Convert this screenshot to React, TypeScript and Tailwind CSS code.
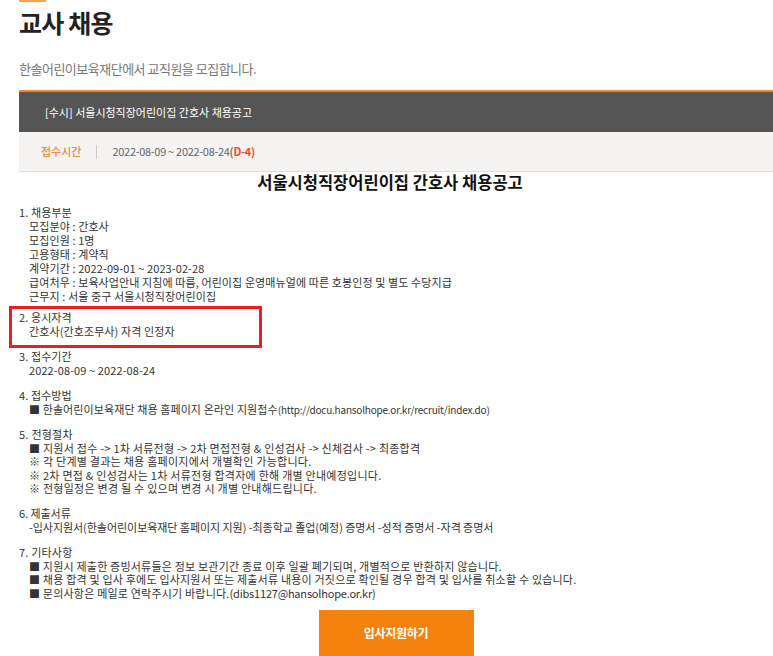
const FONT = "font-['Noto_Sans_CJK_KR','Noto_Sans',sans-serif]"

function Line({ children, indent = false, tight = false }: { children: React.ReactNode; indent?: boolean; tight?: boolean }) {
  return (
    <p className={`whitespace-nowrap ${tight ? 'h-[13.6px] leading-[13.6px]' : 'h-[14px] leading-[14px]'} ${indent ? 'pl-[10px]' : ''}`}>
      {children}
    </p>
  )
}

export default function App() {
  return (
    <div className={`w-[773px] h-[656px] overflow-hidden bg-white ${FONT}`}>
      <div className="pl-[19px]">
        <div className="w-[27px] h-[2px] bg-[#f7a24a]" />
        <h1 className="mt-[3px] text-[25px] font-bold leading-[34px] text-[#222] tracking-[-0.8px]">교사 채용</h1>
        <p className="mt-[21px] text-[13px] leading-[18px] text-[#777] tracking-[-0.5px]">한솔어린이보육재단에서 교직원을 모집합니다.</p>

        <div className="mt-[12px] border-t-2 border-[#f08a24] bg-[#555555] h-[42px] flex items-center pl-[26px]">
          <span className="text-[11px] text-white">[수시] 서울시청직장어린이집 간호사 채용공고</span>
        </div>
        <div className="h-[40px] bg-[#f5f4f2] border-b border-[#dddddd] flex items-center pl-[22px] text-[11px]">
          <span className="text-[#f08a3c] font-medium">접수시간</span>
          <span className="mx-[15px] h-[14px] w-px bg-[#cccccc]" />
          <span className="text-[#666] tracking-[-0.3px]">
            2022-08-09 ~ 2022-08-24<span className="text-[#f04a1a] font-bold">(D-4)</span>
          </span>
        </div>

        <h2 className="text-center text-[16.5px] font-bold leading-[20px] text-[#111] pr-[12px]">서울시청직장어린이집 간호사 채용공고</h2>

        <div className="mt-[13px] text-[11px] text-[#333] tracking-[0.1px]">
          <Line>1. 채용부분</Line>
          <Line indent>모집분야 : 간호사</Line>
          <Line indent>모집인원 : 1명</Line>
          <Line indent>고용형태 : 계약직</Line>
          <Line indent>계약기간 : 2022-09-01 ~ 2023-02-28</Line>
          <Line indent>급여처우 : 보육사업안내 지침에 따름, 어린이집 운영매뉴얼에 따른 호봉인정 및 별도 수당지급</Line>
          <Line indent>근무지 : 서울 중구 서울시청직장어린이집</Line>

          {/* highlighted block */}
          <div className="-ml-[10px] mt-[3px] w-[253px] border-[3px] border-[#ec1c24] pl-[7px] pt-[1px] pb-[7px]">
            <Line>2. 응시자격</Line>
            <Line indent>간호사(간호조무사) 자격 인정자</Line>
          </div>

          <div className="mt-[1px]">
            <Line>3. 접수기간</Line>
            <Line indent>2022-08-09 ~ 2022-08-24</Line>
          </div>
          <div className="mt-[11px]">
            <Line>4. 접수방법</Line>
            <Line indent>
              ■ 한솔어린이보육재단 채용 홈페이지 온라인 지원접수
              <span className="text-[10px] tracking-[-0.2px]">(http://docu.hansolhope.or.kr/recruit/index.do)</span>
            </Line>
          </div>
          <div className="mt-[12px] tracking-[0.25px]">
            <Line tight>5. 전형절차</Line>
            <Line tight indent>■ 지원서 접수 -&gt; 1차 서류전형 -&gt; 2차 면접전형 &amp; 인성검사 -&gt; 신체검사 -&gt; 최종합격</Line>
            <Line tight indent>※ 각 단계별 결과는 채용 홈페이지에서 개별확인 가능합니다.</Line>
            <Line tight indent>※ 2차 면접 &amp; 인성검사는 1차 서류전형 합격자에 한해 개별 안내예정입니다.</Line>
            <Line tight indent>※ 전형일정은 변경 될 수 있으며 변경 시 개별 안내해드립니다.</Line>
          </div>
          <div className="mt-[11px] tracking-[-0.05px]">
            <Line tight>6. 제출서류</Line>
            <Line tight indent>-입사지원서(한솔어린이보육재단 홈페이지 지원) -최종학교 졸업(예정) 증명서 -성적 증명서 -자격 증명서</Line>
          </div>
          <div className="mt-[12px] tracking-[0.2px]">
            <Line tight>7. 기타사항</Line>
            <Line tight indent>■ 지원시 제출한 증빙서류들은 정보 보관기간 종료 이후 일괄 폐기되며, 개별적으로 반환하지 않습니다.</Line>
            <Line tight indent>■ 채용 합격 및 입사 후에도 입사지원서 또는 제출서류 내용이 거짓으로 확인될 경우 합격 및 입사를 취소할 수 있습니다.</Line>
            <Line tight indent>
              ■ 문의사항은 메일로 연락주시기 바랍니다.<span className="tracking-[-0.2px]">(dibs1127@hansolhope.or.kr)</span>
            </Line>
          </div>
        </div>

        <div className="mt-[9px] flex justify-center">
          <button className="w-[155px] h-[48px] bg-[#f5820c] text-white text-[12px] font-bold tracking-[-0.3px] pb-[1px]">입사지원하기</button>
        </div>
      </div>
    </div>
  )
}
